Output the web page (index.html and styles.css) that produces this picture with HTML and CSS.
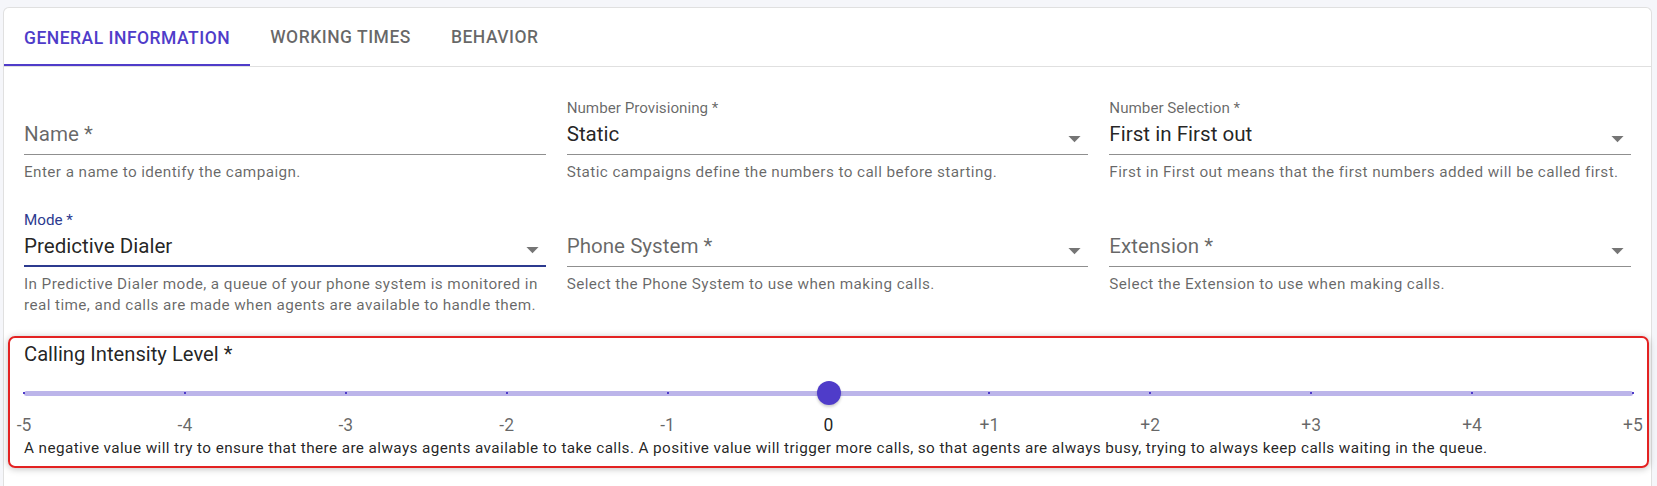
FILE: index.html
```html
<!DOCTYPE html>
<html lang="en">
<head>
  <meta charset="UTF-8">
  <title>Campaign</title>
  <link rel="stylesheet" href="styles.css">
</head>
<body>
  <div id="card">
    <div id="tabs">
      <div class="tab tab-active">General information</div>
      <div class="tab">Working times</div>
      <div class="tab">Behavior</div>
    </div>
    <div id="form">
      <div class="field-grid">
        <div class="field">
          <div class="field-label"></div>
          <div class="field-input"><span class="placeholder">Name *</span></div>
          <div class="helper">Enter a name to identify the campaign.</div>
        </div>
        <div class="field">
          <div class="field-label">Number Provisioning *</div>
          <div class="field-input">
            <span class="value">Static</span>
            <svg class="arrow" viewBox="0 0 24 24"><path d="M7 10l5 5 5-5z"></path></svg>
          </div>
          <div class="helper">Static campaigns define the numbers to call before starting.</div>
        </div>
        <div class="field">
          <div class="field-label">Number Selection *</div>
          <div class="field-input">
            <span class="value">First in First out</span>
            <svg class="arrow" viewBox="0 0 24 24"><path d="M7 10l5 5 5-5z"></path></svg>
          </div>
          <div class="helper">First in First out means that the first numbers added will be called first.</div>
        </div>
        <div class="field field-focused">
          <div class="field-label">Mode *</div>
          <div class="field-input">
            <span class="value">Predictive Dialer</span>
            <svg class="arrow" viewBox="0 0 24 24"><path d="M7 10l5 5 5-5z"></path></svg>
          </div>
          <div class="helper">In Predictive Dialer mode, a queue of your phone system is monitored in real time, and calls are made when agents are available to handle them.</div>
        </div>
        <div class="field">
          <div class="field-label"></div>
          <div class="field-input">
            <span class="placeholder">Phone System *</span>
            <svg class="arrow" viewBox="0 0 24 24"><path d="M7 10l5 5 5-5z"></path></svg>
          </div>
          <div class="helper">Select the Phone System to use when making calls.</div>
        </div>
        <div class="field">
          <div class="field-label"></div>
          <div class="field-input">
            <span class="placeholder">Extension *</span>
            <svg class="arrow" viewBox="0 0 24 24"><path d="M7 10l5 5 5-5z"></path></svg>
          </div>
          <div class="helper">Select the Extension to use when making calls.</div>
        </div>
      </div>

      <div id="intensity">
        <div class="intensity-title">Calling Intensity Level *</div>
        <div class="slider">
          <div class="rail">
            <span class="tick"></span><span class="tick"></span><span class="tick"></span>
            <span class="tick"></span><span class="tick"></span><span class="tick"></span>
            <span class="tick"></span><span class="tick"></span><span class="tick"></span>
            <span class="tick"></span><span class="tick"></span>
          </div>
          <div class="thumb"></div>
        </div>
        <div class="marks">
          <span class="mark">-5</span>
          <span class="mark">-4</span>
          <span class="mark">-3</span>
          <span class="mark">-2</span>
          <span class="mark">-1</span>
          <span class="mark mark-active">0</span>
          <span class="mark">+1</span>
          <span class="mark">+2</span>
          <span class="mark">+3</span>
          <span class="mark">+4</span>
          <span class="mark">+5</span>
        </div>
        <div class="intensity-help">A negative value will try to ensure that there are always agents available to take calls. A positive value will trigger more calls, so that agents are always busy, trying to always keep calls waiting in the queue.</div>
      </div>
    </div>
  </div>
</body>
</html>
```

FILE: styles.css
```css
html, body {
  margin: 0;
  padding: 0;
  background: #f5f6fa;
  font-family: Roboto, "Liberation Sans", sans-serif;
  color: rgba(0,0,0,0.87);
}
#card {
  margin: 7px 5px 0 3px;
  height: 490px;
  background: #fff;
  border: 1px solid #e0e0e0;
  border-bottom: none;
  border-radius: 6px 6px 0 0;
  box-sizing: border-box;
}
#tabs {
  display: flex;
  height: 58px;
  border-bottom: 1px solid #e0e0e0;
}
.tab {
  display: flex;
  align-items: center;
  padding: 0 20px;
  font-size: 17.5px;
  font-weight: 500;
  letter-spacing: 0.5px;
  text-transform: uppercase;
  color: rgba(0,0,0,0.6);
  box-sizing: border-box;
}
.tab-active {
  color: #4f3cc9;
  border-bottom: 2px solid #4f3cc9;
  padding-top: 4px;
}
#form {
  padding: 31px 20px 0 20px;
}
.field-grid {
  display: grid;
  grid-template-columns: 1fr 1fr 1fr;
  column-gap: 21px;
  row-gap: 27px;
}
.field {
  display: flex;
  flex-direction: column;
}
.field-label {
  height: 20px;
  line-height: 20px;
  font-size: 15.2px;
  color: rgba(0,0,0,0.6);
}
.field-input {
  display: flex;
  align-items: center;
  height: 37px;
  padding-bottom: 4px;
  box-sizing: border-box;
  border-bottom: 1px solid #8f8f8f;
}
.value {
  font-size: 20.6px;
  color: rgba(0,0,0,0.87);
}
.placeholder {
  font-size: 20.6px;
  color: rgba(0,0,0,0.6);
}
.arrow {
  width: 29px;
  height: 29px;
  margin-left: auto;
  margin-right: -1px;
  margin-top: 8px;
  fill: rgba(0,0,0,0.54);
}
.field-focused .field-label {
  color: #2c3a8f;
}
.field-focused .field-input {
  border-bottom: 2px solid #2c3a8f;
}
.helper {
  margin-top: 7px;
  font-size: 15.3px;
  line-height: 21px;
  letter-spacing: 0.4px;
  color: rgba(0,0,0,0.6);
}
#intensity {
  margin: 20px -18px 0 -16px;
  padding: 4px 14px 8px 14px;
  border: 2px solid #e32222;
  border-radius: 7px;
  box-shadow: 0 1px 7px rgba(0,0,0,0.25);
}
.intensity-title {
  font-size: 20.2px;
  line-height: 24px;
  color: rgba(0,0,0,0.87);
}
.slider {
  position: relative;
  height: 24px;
  margin-top: 15px;
  display: flex;
  align-items: center;
}
.rail {
  flex: 1;
  height: 5px;
  border-radius: 3px;
  background: #bcb5ea;
  display: flex;
  justify-content: space-between;
  align-items: center;
}
.tick {
  width: 0;
  display: flex;
  justify-content: center;
}
.tick::before {
  content: "";
  flex-shrink: 0;
  width: 2px;
  height: 2px;
  background: #4f3cc9;
}
.thumb {
  position: absolute;
  left: 50%;
  top: 0;
  width: 24px;
  height: 24px;
  margin-left: -12px;
  border-radius: 50%;
  background: #4f3cc9;
  box-shadow: 0 2px 3px rgba(0,0,0,0.2);
}
.marks {
  display: flex;
  justify-content: space-between;
  margin-top: 10px;
  line-height: 20px;
}
.mark {
  width: 0;
  display: flex;
  justify-content: center;
  white-space: nowrap;
  font-size: 17.5px;
  color: rgba(0,0,0,0.6);
}
.mark-active {
  color: rgba(0,0,0,0.87);
}
.intensity-help {
  margin-top: 3px;
  font-size: 15.3px;
  line-height: 20px;
  letter-spacing: 0.4px;
  color: rgba(0,0,0,0.87);
}
```
